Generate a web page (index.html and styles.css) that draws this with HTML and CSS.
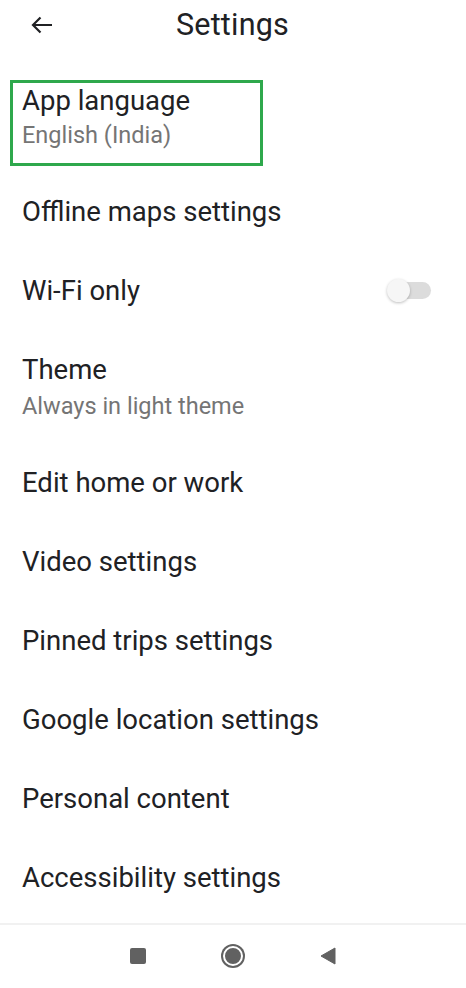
FILE: index.html
```html
<!DOCTYPE html>
<html lang="en">

<head>
    <meta charset="UTF-8">
    <meta name="viewport" content="width=device-width, initial-scale=1.0">
    <title>Settings</title>
    <link rel="stylesheet" href="styles.css">
</head>

<body>
    <div class="screen">
        <div class="header">
            <div class="back">
                <svg width="22" height="18" viewBox="0 0 22 18">
                    <path d="M21 9H2M9.5 1.5L2 9l7.5 7.5" fill="none" stroke="#202124" stroke-width="2.2" />
                </svg>
            </div>
            <h1>Settings</h1>
        </div>

        <div class="list">
            <div class="row two highlight-row">
                <div class="highlight"></div>
                <div class="title">App language</div>
                <div class="sub">English (India)</div>
            </div>
            <div class="row"><div class="title">Offline maps settings</div></div>
            <div class="row toggle-row">
                <div class="title">Wi-Fi only</div>
                <div class="toggle"><span class="thumb"></span></div>
            </div>
            <div class="row two theme">
                <div class="title">Theme</div>
                <div class="sub">Always in light theme</div>
            </div>
            <div class="row"><div class="title">Edit home or work</div></div>
            <div class="row"><div class="title">Video settings</div></div>
            <div class="row"><div class="title">Pinned trips settings</div></div>
            <div class="row"><div class="title">Google location settings</div></div>
            <div class="row"><div class="title">Personal content</div></div>
            <div class="row"><div class="title">Accessibility settings</div></div>
        </div>

        <div class="navbar">
            <span class="nav-square"></span>
            <span class="nav-home"></span>
            <svg class="nav-back" width="16" height="18" viewBox="0 0 16 18">
                <path d="M15 1L1 9l14 8z" fill="#616161" stroke="#616161" stroke-width="1" stroke-linejoin="round" />
            </svg>
        </div>
    </div>
</body>

</html>
```

FILE: styles.css
```css
body {
    margin: 0;
    padding: 0;
    background: #fff;
    font-family: Roboto, "Noto Sans", sans-serif;
    color: #202124;
}

.screen {
    width: 466px;
    height: 988px;
    display: flex;
    flex-direction: column;
}

.header {
    height: 48px;
    display: flex;
    align-items: center;
}

.back {
    width: 22px;
    height: 18px;
    margin-left: 31px;
    margin-top: 1px;
}

.header h1 {
    margin: 0 0 0 123px;
    font-size: 30.5px;
    font-weight: 400;
    letter-spacing: 0.2px;
}

.list {
    flex: 1;
    display: flex;
    flex-direction: column;
    padding-top: 11px;
}

.row {
    height: 79px;
    padding-left: 22px;
    display: flex;
    flex-direction: column;
    justify-content: center;
    box-sizing: border-box;
}

.row.two {
    height: 113px;
}

.highlight-row {
    position: relative;
    padding-top: 3px;
}

.highlight {
    position: absolute;
    left: 10px;
    top: 21px;
    width: 253px;
    height: 86px;
    border: 3px solid #2ea84c;
    box-sizing: border-box;
}

.title {
    font-size: 27.5px;
    line-height: 32px;
}

.sub {
    font-size: 23.5px;
    line-height: 28px;
    color: #757575;
    margin-top: 4.5px;
}

.theme .sub {
    margin-top: 6px;
}

.toggle-row {
    flex-direction: row;
    align-items: center;
    justify-content: space-between;
    padding-right: 35px;
}

.toggle {
    width: 42px;
    height: 17px;
    border-radius: 9px;
    background: #dcdcdc;
    position: relative;
}

.thumb {
    position: absolute;
    left: -2px;
    top: -3px;
    width: 23px;
    height: 23px;
    border-radius: 50%;
    background: #f6f6f6;
    box-shadow: 0 1px 3px rgba(0, 0, 0, 0.25);
}

.navbar {
    height: 62px;
    border-top: 2px solid #f1f1f1;
    display: flex;
    align-items: center;
    justify-content: center;
    gap: 77px;
    padding-right: 1px;
    padding-bottom: 1px;
}

.nav-square {
    width: 16px;
    height: 16px;
    background: #616161;
    border-radius: 2px;
}

.nav-home {
    width: 16px;
    height: 16px;
    border-radius: 50%;
    background: #616161;
    border: 2px solid #fff;
    box-shadow: 0 0 0 2px #616161;
}
```
